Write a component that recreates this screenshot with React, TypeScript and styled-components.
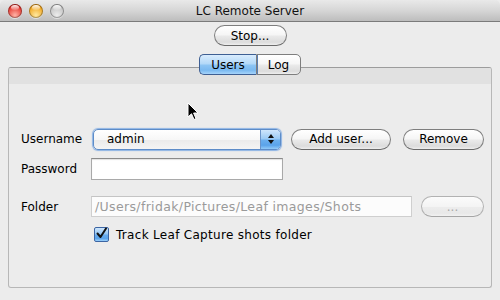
import React from "react";
import styled, { createGlobalStyle } from "styled-components";

const Global = createGlobalStyle`
  html, body { margin: 0; padding: 0; }
  body {
    width: 500px; height: 300px; overflow: hidden;
    background: #ececec;
    font-family: "DejaVu Sans", "Liberation Sans", sans-serif;
    font-size: 12px; color: #000;
  }
`;

const Window = styled.div`
  position: relative;
  width: 500px; height: 300px;
  display: flex; flex-direction: column;
  background: #ececec;
  border-radius: 5px 5px 0 0;
  overflow: hidden;
`;

const TitleBar = styled.div`
  height: 21px;
  flex: none;
  display: grid;
  grid-template-columns: 1fr auto 1fr;
  align-items: center;
  background: linear-gradient(to bottom, #e9e9e9 0%, #d6d6d6 50%, #bdbdbd 100%);
  border-bottom: 1px solid #7b7b7b;
`;

const Lights = styled.div`
  display: flex; gap: 7px; padding-left: 8px; padding-top: 1px;
`;

const Light = styled.div<{ $c: string; $d: string; $r: string }>`
  width: 14px; height: 14px; border-radius: 50%;
  background: radial-gradient(circle at 50% 80%, ${(p) => p.$c} 0%, ${(p) => p.$d} 70%, ${(p) => p.$r} 100%);
  box-shadow: inset 0 0 0 1px rgba(0,0,0,0.3), 0 1px 0 rgba(255,255,255,0.5);
  position: relative;
  &::after {
    content: ""; position: absolute; left: 3px; top: 1px; width: 8px; height: 5px;
    border-radius: 50%;
    background: linear-gradient(to bottom, rgba(255,255,255,0.95), rgba(255,255,255,0.15));
  }
`;

const Title = styled.div`
  font-size: 12px; color: #111; padding-top: 1px;
`;

const Body = styled.div`
  flex: 1;
  display: flex; flex-direction: column; align-items: center;
  padding: 3px 8px 12px;
`;

const PillButton = styled.button<{ $w: number; $disabled?: boolean }>`
  width: ${(p) => p.$w}px; height: 21px;
  border-radius: 11px;
  border: 1px solid ${(p) => (p.$disabled ? "#b2b2b2" : "#7e7e7e")};
  border-bottom-color: ${(p) => (p.$disabled ? "#a5a5a5" : "#6a6a6a")};
  background: ${(p) =>
    p.$disabled
      ? "linear-gradient(to bottom, #fbfbfb 0%, #f4f4f4 50%, #ececec 55%, #e8e8e8 85%, #f1f1f1 100%)"
      : "linear-gradient(to bottom, #ffffff 0%, #f6f6f6 45%, #e9e9e9 55%, #dcdcdc 85%, #eeeeee 100%)"};
  font-family: "DejaVu Sans", "Liberation Sans", sans-serif;
  font-size: 12px;
  color: ${(p) => (p.$disabled ? "#a9a9a9" : "#000")};
  padding: 0;
  display: flex; align-items: center; justify-content: center;
  flex: none;
`;

const TabsRow = styled.div`
  margin-top: 8px;
  display: flex;
  position: relative; z-index: 1;
`;

const Tab = styled.div<{ $active?: boolean; $side: "l" | "r"; $w: number }>`
  width: ${(p) => p.$w}px; height: 19px;
  display: flex; align-items: center; justify-content: center;
  border: 1px solid ${(p) => (p.$active ? "#3e5f93" : "#7e7e7e")};
  ${(p) => (p.$side === "l" ? "border-radius: 5px 0 0 5px; border-right: none;" : "border-radius: 0 5px 5px 0;")}
  background: ${(p) =>
    p.$active
      ? "linear-gradient(to bottom, #d9ecfd 0%, #b4d9f8 45%, #8cc4f3 55%, #7ab9f0 80%, #a6d4fb 100%)"
      : "linear-gradient(to bottom, #ffffff 0%, #f6f6f6 45%, #e9e9e9 55%, #dcdcdc 85%, #eeeeee 100%)"};
  ${(p) => (p.$side === "r" ? "box-shadow: inset 1px 0 0 #5a7db0;" : "")}
`;

const Panel = styled.div`
  align-self: stretch;
  flex: 1;
  margin-top: -8px;
  border: 1px solid #b7b7b7;
  border-top-color: #9c9c9c;
  border-radius: 3px;
  display: flex; flex-direction: column;
`;

const Band = styled.div`
  height: 16px;
  background: #e1e1e1;
  border-radius: 2px 2px 0 0;
`;

const Form = styled.div`
  display: flex; flex-direction: column;
  padding: 44px 0 0 12px;
`;

const Row = styled.div<{ $mt: number; $h?: number }>`
  display: flex; align-items: center;
  margin-top: ${(p) => p.$mt}px;
  height: ${(p) => p.$h ?? 22}px;
`;

const Label = styled.div`
  width: 71px; flex: none;
  font-size: 12px;
`;

const Select = styled.div`
  width: 186px; height: 19px;
  border: 1px solid #5d8cc8;
  border-radius: 5px;
  box-shadow: 0 0 1px 1px rgba(110, 160, 225, 0.75);
  background: linear-gradient(to bottom, #ffffff 0%, #f7f7f7 50%, #ebebeb 55%, #f4f4f4 100%);
  display: flex; align-items: center;
  overflow: hidden;
  flex: none;
  margin-left: 1px;
`;

const SelectText = styled.div`
  flex: 1; padding-left: 13px; font-size: 12px;
`;

const SelectArrows = styled.div`
  width: 19px; height: 100%;
  border-left: 1px solid #6b94c9;
  background: linear-gradient(to bottom, #cfe6fc 0%, #9ccbf5 45%, #6aaeee 55%, #5aa3ea 80%, #92cbf9 100%);
  display: flex; flex-direction: column; align-items: center; justify-content: center; gap: 2px;
`;

const Tri = styled.div<{ $up?: boolean }>`
  width: 0; height: 0;
  border-left: 3px solid transparent; border-right: 3px solid transparent;
  ${(p) => (p.$up ? "border-bottom: 4px solid #111;" : "border-top: 4px solid #111;")}
`;

const Field = styled.div<{ $w: number; $h?: number; $disabled?: boolean }>`
  width: ${(p) => p.$w}px; height: ${(p) => (p.$h ?? 22) - 2}px;
  flex: none;
  background: ${(p) => (p.$disabled ? "#fcfcfc" : "#fff")};
  border: 1px solid ${(p) => (p.$disabled ? "#cfcfcf" : "#a9a9a9")};
  border-top-color: ${(p) => (p.$disabled ? "#c4c4c4" : "#8a8a8a")};
  box-shadow: ${(p) => (p.$disabled ? "none" : "inset 0 1px 1px rgba(0,0,0,0.12)")};
  display: flex; align-items: center;
  padding-left: 3px;
  box-sizing: content-box;
  margin-left: -1px;
  font-size: 12.5px;
  letter-spacing: 0.35px;
  color: #9a9a9a;
  white-space: nowrap; overflow: hidden;
`;

const Spacer = styled.div<{ $w: number }>`
  width: ${(p) => p.$w}px; flex: none;
`;

const CheckBox = styled.div`
  width: 13px; height: 13px;
  margin-left: 2px;
  border: 1px solid #3c65a3;
  border-radius: 2px;
  background: linear-gradient(to bottom, #cfe6fc 0%, #94c6f4 45%, #66abed 55%, #5aa3ea 80%, #9bd0fb 100%);
  position: relative;
  flex: none;
`;

const CheckLabel = styled.div`
  margin-left: 7px; font-size: 12px; letter-spacing: 0.3px;
`;

const Cursor = styled.svg`
  position: absolute; left: 187px; top: 102px;
`;

export default function App() {
  return (
    <>
      <Global />
      <Window>
        <TitleBar>
          <Lights>
            <Light $c="#ffb3a6" $d="#e4322a" $r="#9e1410" />
            <Light $c="#ffe9a0" $d="#f0a41c" $r="#b0690a" />
            <Light $c="#ececec" $d="#c2c2c2" $r="#9a9a9a" />
          </Lights>
          <Title>LC Remote Server</Title>
          <div />
        </TitleBar>
        <Body>
          <PillButton $w={73}>Stop...</PillButton>
          <TabsRow>
            <Tab $active $side="l" $w={56}>Users</Tab>
            <Tab $side="r" $w={43}>Log</Tab>
          </TabsRow>
          <Panel>
            <Band />
            <Form>
              <Row $mt={0}>
                <Label>Username</Label>
                <Select>
                  <SelectText>admin</SelectText>
                  <SelectArrows>
                    <Tri $up />
                    <Tri />
                  </SelectArrows>
                </Select>
                <Spacer $w={10} />
                <PillButton $w={100}>Add user...</PillButton>
                <Spacer $w={12} />
                <PillButton $w={81}>Remove</PillButton>
              </Row>
              <Row $mt={8}>
                <Label>Password</Label>
                <Field $w={187} />
              </Row>
              <Row $mt={16} $h={21}>
                <Label>Folder</Label>
                <Field $w={316} $h={21} $disabled>/Users/fridak/Pictures/Leaf images/Shots</Field>
                <Spacer $w={9} />
                <PillButton $w={63} $disabled>...</PillButton>
              </Row>
              <Row $mt={10} $h={15}>
                <Spacer $w={71} />
                <CheckBox>
                  <svg width="13" height="13" viewBox="0 0 13 13" style={{ position: "absolute", left: 0, top: -1 }}>
                    <path d="M2.5 6.5 L5.5 10 L11 1.5" fill="none" stroke="#111" strokeWidth="2" strokeLinecap="round" strokeLinejoin="round" />
                  </svg>
                </CheckBox>
                <CheckLabel>Track Leaf Capture shots folder</CheckLabel>
              </Row>
            </Form>
          </Panel>
        </Body>
        <Cursor width="13" height="20" viewBox="0 0 13 20">
          <path d="M1 1 L1 15 L4.5 11.8 L7 17.5 L9 16.6 L6.6 11 L11 11 Z" fill="#000" stroke="#fff" strokeWidth="1" strokeLinejoin="round" />
        </Cursor>
      </Window>
    </>
  );
}
